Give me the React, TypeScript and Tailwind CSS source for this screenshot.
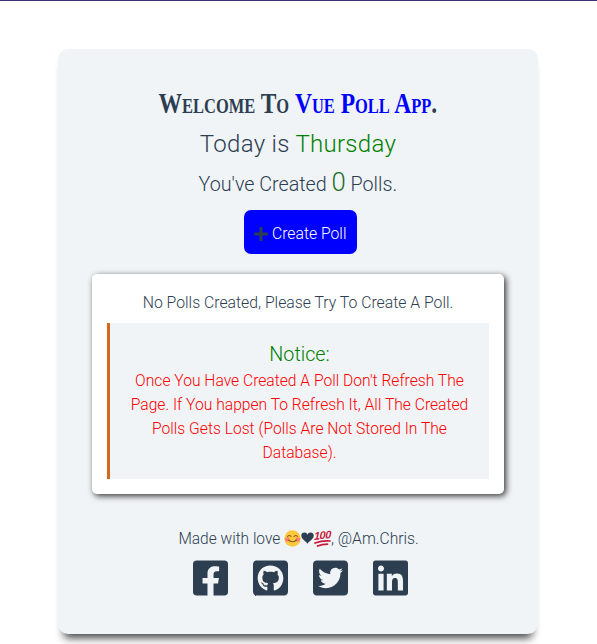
import React from "react";
import {
  FaFacebookSquare,
  FaGithubSquare,
  FaTwitterSquare,
  FaLinkedin,
  FaPlus,
} from "react-icons/fa";

function Smile() {
  return (
    <svg className="inline-block h-[17px] w-[17px] shrink-0" viewBox="0 0 34 34">
      <circle cx="17" cy="17" r="16.500" fill="#fcc93d" />
      <circle cx="6.5" cy="19" r="4.5" fill="#f77d78" />
      <circle cx="27.5" cy="19" r="4.5" fill="#f77d78" />
      <path d="M7 13q3.500-4 7 0M20 13q3.500-4 7 0M9 20q8 7 16 0" fill="none" stroke="#8a5a20" strokeWidth="2.200" strokeLinecap="round" />
    </svg>
  );
}

function Heart() {
  return (
    <svg className="inline-block h-[12px] w-[13px] shrink-0" viewBox="0 0 24 22" preserveAspectRatio="none">
      <path d="M12 21.500C9 17 0.500 13 0.500 6.500C0.500 3 3 1 6.500 1C9 1 11 2.500 12 5C13 2.500 15 1 17.500 1C21 1 23.500 3 23.500 6.500C23.500 13 15 17 12 21.500Z" fill="#2c3e50" />
    </svg>
  );
}

function Hundred() {
  return (
    <span className="flex h-[17px] w-[17px] shrink-0 flex-col items-center text-[#c8193c]">
      <span className="h-[10px] -skew-y-6 font-['Liberation_Sans'] text-[11px] leading-[11px] font-bold tracking-[-0.5px] italic">100</span>
      <svg className="h-[7px] w-[17px]" viewBox="0 0 34 14">
        <path d="M2 6Q16 1 32 2M7 12Q16 8 27 8" fill="none" stroke="currentColor" strokeWidth="3.500" strokeLinecap="round" />
      </svg>
    </span>
  );
}

export default function App() {
  return (
    <div className="h-[644px] overflow-hidden border-t border-[#41307a] bg-white font-['Roboto',sans-serif] text-[#2c3e50]">
      <main className="mt-12 ml-[58px] flex h-[585px] w-[480px] flex-col items-center rounded-[10px] bg-[#f0f4f7] pt-9 font-light whitespace-nowrap shadow-[0_10px_8px_-6px_#444]">
        <h1 className="flex h-9 origin-center scale-x-[0.783] items-center font-['Liberation_Serif',serif] text-[30px] leading-9 font-bold [font-variant:small-caps]">
          <span>Welcome To&nbsp;</span>
          <span className="text-[#0000ff]">Vue Poll App</span>
          <span>.</span>
        </h1>
        <h2 className="mt-[5px] h-9 text-[24px] leading-9 tracking-[0.3px]">
          Today is <span className="text-[#008000]">Thursday</span>
        </h2>
        <h3 className="mt-0.5 h-[46px] scale-x-[0.985] text-[20px] leading-9">
          You've Created <span className="text-[26px] text-[#1b7029]">0</span> Polls.
        </h3>
        <button className="ml-1 flex h-11 w-[113px] items-center gap-[3px] rounded-[7px] bg-[#0000ff] pt-[3px] pl-[9px] text-[17px] text-white">
          <FaPlus className="shrink-0 text-[16px] text-[#2c3e50]" />
          <span className="origin-left scale-x-[0.925]">Create Poll</span>
        </button>
        <section className="mt-5 h-[220px] w-[412px] rounded-[5px] bg-white px-[15px] pt-4 text-center text-[17px] shadow-[2px_2px_6px_#333]">
          <p className="h-[33px] scale-x-[0.928] leading-6">No Polls Created, Please Try To Create A Poll.</p>
          <div className="h-[156px] border-l-[3px] border-[#d2691e] bg-[#f0f4f7] pt-4">
            <h4 className="h-[29px] scale-x-[0.985] text-[20px] leading-[30px] text-[#008000]">Notice:</h4>
            <p className="scale-x-[0.920] leading-6 text-[#ff0000]">
              Once You Have Created A Poll Don't Refresh The<br />
              Page. If You happen To Refresh It, All The Created<br />
              Polls Gets Lost (Polls Are Not Stored In The<br />
              Database).
            </p>
          </div>
        </section>
        <footer className="mt-8 ml-1 flex flex-col items-center">
          <p className="-ml-[6px] flex h-6 items-center text-[17px] leading-6">
            <span className="origin-right scale-x-[0.910]">Made with love&nbsp;</span>
            <Smile />
            <Heart />
            <Hundred />
            <span className="origin-left scale-x-[0.920]">, @Am.Chris.</span>
          </p>
          <div className="mt-2 flex gap-[25px]">
            <FaFacebookSquare className="h-10 w-[35px]" />
            <FaGithubSquare className="h-10 w-[35px]" />
            <FaTwitterSquare className="h-10 w-[35px]" />
            <FaLinkedin className="h-10 w-[35px]" />
          </div>
        </footer>
      </main>
    </div>
  );
}
